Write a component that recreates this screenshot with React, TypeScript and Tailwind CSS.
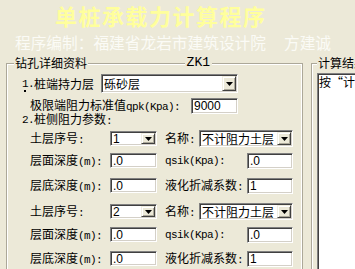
import React from "react";

const sunken =
  "bg-white border border-t-[#808080] border-l-[#808080] border-r-white border-b-white shadow-[inset_1px_1px_0_#404040,inset_-1px_-1px_0_#d4d0c8]";
const mono = "font-['Liberation_Mono',monospace] text-[11px] tracking-[-0.6px]";
const line = "border-[#aca899]";

function Arrow() {
  return (
    <div className="flex w-[14px] shrink-0 items-center justify-center bg-[#ece9d8] border border-t-[#f1efe2] border-l-[#f1efe2] border-r-[#404040] border-b-[#404040] shadow-[inset_1px_1px_0_#fff,inset_-1px_-1px_0_#aca899]">
      <svg width="7" height="4" viewBox="0 0 7 4">
        <path d="M0 0h7L3.5 4z" fill="#000" />
      </svg>
    </div>
  );
}

function Combo({ value, className, cjk }: { value: string; className: string; cjk?: boolean }) {
  return (
    <div className={`${sunken} ${className} flex items-stretch justify-between p-[1px]`}>
      <span
        className={`flex items-center pl-[1px] whitespace-nowrap ${
          cjk ? "text-[12px]" : "font-['Liberation_Sans',sans-serif] text-[12px]"
        }`}
      >
        {value}
      </span>
      <Arrow />
    </div>
  );
}

function Field({ value, className }: { value: string; className: string }) {
  return (
    <div
      className={`${sunken} ${className} flex items-center pl-[2px] font-['Liberation_Sans',sans-serif] text-[12px] leading-none`}
    >
      {value}
    </div>
  );
}

function LayerRows({ no, first }: { no: string; first?: boolean }) {
  return (
    <>
      <div className={`${first ? "mt-[4px]" : "mt-[9px]"} flex h-[17px] items-center pl-[8px]`}>
        <span className="w-[80px]">
          土层序号<span className={mono}>:</span>
        </span>
        <Combo value={no} className="h-[15px] w-[47px]" />
        <span className="w-[8px]" />
        <span className="w-[34px]">
          名称<span className={mono}>:</span>
        </span>
        <Combo value="不计阻力土层" cjk className="h-[17px] w-[94px]" />
      </div>
      <div className={`${first ? "mt-[5px]" : "mt-[6px]"} flex h-[17px] items-center pl-[8px]`}>
        <span className="w-[80px]">
          层面深度<span className={mono}>(m):</span>
        </span>
        <Field value=".0" className="h-[15px] w-[47px]" />
        <span className="w-[8px]" />
        <span className={`w-[82px] ${mono}`}>qsik(Kpa):</span>
        <Field value=".0" className="h-[16px] w-[46px]" />
      </div>
      <div className={`${first ? "mt-[8px]" : "mt-[7px]"} flex h-[17px] items-center pl-[8px]`}>
        <span className="w-[80px]">
          层底深度<span className={mono}>(m):</span>
        </span>
        <Field value=".0" className="h-[15px] w-[47px]" />
        <span className="w-[8px]" />
        <span className="w-[82px]">
          液化折减系数<span className={mono}>:</span>
        </span>
        <Field value="1" className="h-[16px] w-[46px]" />
      </div>
    </>
  );
}

export default function App() {
  return (
    <div className="h-[269px] w-[355px] overflow-hidden bg-[#ece9d8] font-['Noto_Sans_CJK_SC',sans-serif] text-black">
      <div className="mt-[1px] h-[28px] whitespace-nowrap pl-[55px] text-[22px] font-bold leading-[28px] tracking-[1.5px] text-[#ffff9c]">
        单桩承载力计算程序
      </div>
      <div className="mt-[4px] h-[20px] whitespace-nowrap pl-[15px] text-[15.7px] leading-[20px] text-[#fbfbf6]">
        程序编制：福建省龙岩市建筑设计院<span className="ml-[18px]">方建诚</span>
      </div>

      <div className="mt-[4px] flex h-[212px] w-[520px] text-[12px] leading-[12px]">
        {/* 钻孔详细资料 */}
        <div className="ml-[6px] flex w-[297px] shrink-0 flex-col">
          <div className="flex h-[12px] items-center">
            <div className={`h-[6px] w-[8px] self-end border-l border-t ${line} shadow-[inset_1px_1px_0_#fff]`} />
            <span className="px-[1px]">钻孔详细资料</span>
            <div className={`h-[6px] flex-1 self-end border-t ${line} shadow-[inset_0_1px_0_#fff]`} />
            <span className="px-[2px] font-['Liberation_Mono',monospace] text-[13px]">ZK1</span>
            <div className={`h-[6px] w-[91px] self-end border-r border-t ${line} shadow-[inset_-1px_1px_0_#fff]`} />
          </div>
          <div className={`flex-1 border-l border-r ${line} pl-[15px] shadow-[inset_1px_0_0_#fff,inset_-1px_0_0_#fff]`}>
            <div className="mt-[5px] flex h-[19px] items-center">
              <span className={`relative w-[12px] shrink-0 ${mono}`}>
                1.
                <span className="absolute left-[2px] top-[12px] h-[2px] w-[2px] bg-black" />
              </span>
              <span className="w-[67px]">桩端持力层</span>
              <Combo value="砾砂层" cjk className="h-[19px] w-[137px]" />
            </div>
            <div className="mt-[5px] flex h-[16px] items-center pl-[8px]">
              <span className="w-[161px] whitespace-nowrap">
                极限端阻力标准值<span className={mono}>qpk(Kpa):</span>
              </span>
              <Field value="9000" className="h-[16px] w-[47px]" />
            </div>
            <div className="flex h-[12px] items-center">
              <span className={`w-[12px] shrink-0 ${mono}`}>2.</span>
              <span>
                桩侧阻力参数<span className={mono}>:</span>
              </span>
            </div>
            <LayerRows no="1" first />
            <LayerRows no="2" />
          </div>
        </div>

        {/* 计算结果 */}
        <div className="ml-[8px] flex w-[160px] shrink-0 flex-col">
          <div className="flex h-[12px] items-center">
            <div className={`h-[6px] w-[6px] self-end border-l border-t ${line} shadow-[inset_1px_1px_0_#fff]`} />
            <span className="px-[1px] whitespace-nowrap">计算结果</span>
            <div className={`h-[6px] flex-1 self-end border-r border-t ${line}`} />
          </div>
          <div className={`flex-1 border-l border-r ${line} pl-[5px] pt-[4px] shadow-[inset_1px_0_0_#fff]`}>
            <div className={`${sunken} h-[200px] w-[140px] pl-[1px] pt-[2px]`}>按“计算”按钮开始计算</div>
          </div>
        </div>
      </div>
    </div>
  );
}
